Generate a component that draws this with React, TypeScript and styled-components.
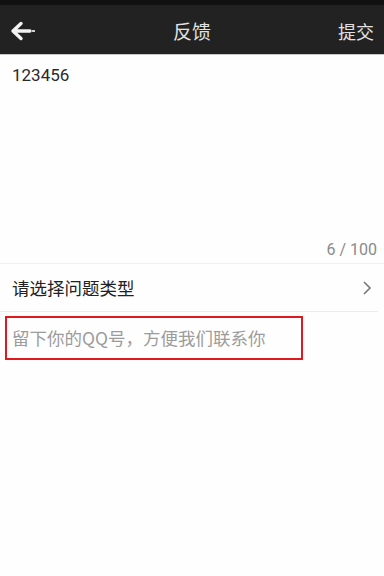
import React from "react";
import styled, { createGlobalStyle } from "styled-components";

const Global = createGlobalStyle`
  html, body { margin: 0; padding: 0; background: #fefefe; }
  body { font-family: "Roboto", "Noto Sans CJK SC", sans-serif; }
  * { box-sizing: border-box; }
`;

const Page = styled.div`
  width: 384px;
  height: 576px;
  display: flex;
  flex-direction: column;
  background: #fefefe;
  overflow: hidden;
`;

const StatusBar = styled.div`
  height: 5px;
  background: #111111;
`;

const Header = styled.div`
  height: 50px;
  background: #222222;
  border-bottom: 1px solid #c8c8c8;
  display: grid;
  grid-template-columns: 60px 1fr 60px;
  align-items: center;
`;

const BackButton = styled.div`
  display: flex;
  align-items: center;
  padding-left: 10px;
  padding-top: 3px;
`;

const Title = styled.div`
  text-align: center;
  color: #e2e2e2;
  font-size: 19px;
  font-family: "Noto Sans CJK SC", sans-serif;
  padding-top: 2px;
`;

const Action = styled.div`
  text-align: right;
  padding-right: 10px;
  color: #e2e2e2;
  font-size: 18px;
  font-family: "Noto Sans CJK SC", sans-serif;
  padding-top: 2px;
`;

const Content = styled.div`
  position: relative;
  display: flex;
  flex-direction: column;
  flex: 1;
`;

const TextArea = styled.div`
  height: 209px;
  display: flex;
  flex-direction: column;
  justify-content: space-between;
  padding: 10px 7px 4px 12px;
  border-bottom: 1px solid #f0f0f0;
`;

const InputText = styled.div`
  font-size: 17px;
  color: #2a2a2a;
  font-family: "Roboto", sans-serif;
`;

const Counter = styled.div`
  text-align: right;
  font-size: 16px;
  color: #8a8a8a;
  font-family: "Roboto", sans-serif;
`;

const Row = styled.div`
  height: 48px;
  display: flex;
  align-items: center;
  justify-content: space-between;
  padding: 0 6px 0 12px;
  margin-right: 6px;
  border-bottom: 1px solid #ececec;
`;

const RowLabel = styled.div`
  font-size: 17.5px;
  color: #222222;
  font-family: "Noto Sans CJK SC", sans-serif;
`;

const InputRow = styled.div`
  height: 50px;
  display: flex;
  align-items: center;
  padding: 0 12px;
`;

const Placeholder = styled.div`
  font-size: 17.5px;
  color: #9c9c9c;
  font-family: "Noto Sans CJK SC", sans-serif;
`;

const Highlight = styled.div`
  position: absolute;
  left: 5px;
  top: 261px;
  width: 298px;
  height: 44px;
  border: 2px solid #e0191f;
  pointer-events: none;
`;

export default function App() {
  return (
    <>
      <Global />
      <Page>
        <StatusBar />
        <Header>
          <BackButton>
            <svg width="28" height="20" viewBox="0 0 28 20">
              <path
                d="M11 2.5 L3 10 L11 17.5 M3 10 L20 10"
                stroke="#f2f2f2"
                strokeWidth="3.4"
                fill="none"
                strokeLinecap="round"
                strokeLinejoin="round"
              />
              <rect x="22" y="9" width="3" height="2" fill="#cfcfcf" />
            </svg>
          </BackButton>
          <Title>反馈</Title>
          <Action>提交</Action>
        </Header>
        <Content>
          <TextArea>
            <InputText>123456</InputText>
            <Counter>6 / 100</Counter>
          </TextArea>
          <Row>
            <RowLabel>请选择问题类型</RowLabel>
            <svg width="10" height="16" viewBox="0 0 10 16">
              <path d="M2 2 L8 8 L2 14" stroke="#777" strokeWidth="1.6" fill="none" />
            </svg>
          </Row>
          <InputRow>
            <Placeholder>留下你的QQ号，方便我们联系你</Placeholder>
          </InputRow>
          <Highlight />
        </Content>
      </Page>
    </>
  );
}
